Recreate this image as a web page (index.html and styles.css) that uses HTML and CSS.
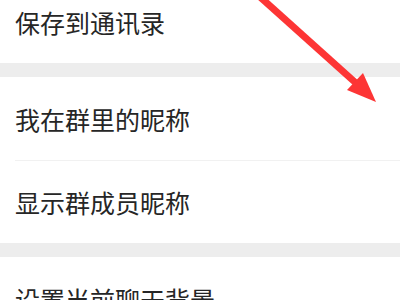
FILE: index.html
```html
<!DOCTYPE html>
<html lang="zh-CN">

<head>
    <meta charset="UTF-8">
    <meta name="viewport" content="width=device-width, initial-scale=1.0">
    <title>聊天信息</title>
    <link rel="stylesheet" href="styles.css">
</head>

<body>
    <div class="page">
        <div class="section first">
            <div class="row">保存到通讯录</div>
        </div>
        <div class="gap"></div>
        <div class="section">
            <div class="row">我在群里的昵称</div>
            <div class="row divided">显示群成员昵称</div>
        </div>
        <div class="gap"></div>
        <div class="section">
            <div class="row">设置当前聊天背景</div>
        </div>
    </div>

    <svg class="arrow" width="400" height="300" viewBox="0 0 400 300">
        <line x1="259" y1="-4" x2="357" y2="84" stroke="#fd3535" stroke-width="7" />
        <polygon points="376,102 347,90 363,73" fill="#fd3535" />
    </svg>
</body>

</html>
```

FILE: styles.css
```css
body {
    margin: 0;
    background-color: #ffffff;
    font-family: "Noto Sans CJK SC", "Noto Sans", sans-serif;
    overflow: hidden;
}

.page {
    width: 400px;
}

.section {
    background-color: #ffffff;
}

.section.first {
    margin-top: -20px;
}

.row {
    display: flex;
    align-items: center;
    height: 83px;
    box-sizing: border-box;
    padding-left: 15px;
    font-size: 25px;
    color: #262626;
}

.row.divided {
    position: relative;
    height: 83px;
}

.row.divided::before {
    content: "";
    position: absolute;
    top: 0;
    left: 15px;
    right: 0;
    height: 1px;
    background-color: #f1f1f1;
}

.gap {
    height: 14px;
    background-color: #ededed;
}

.arrow {
    position: absolute;
    top: 0;
    left: 0;
}
```
